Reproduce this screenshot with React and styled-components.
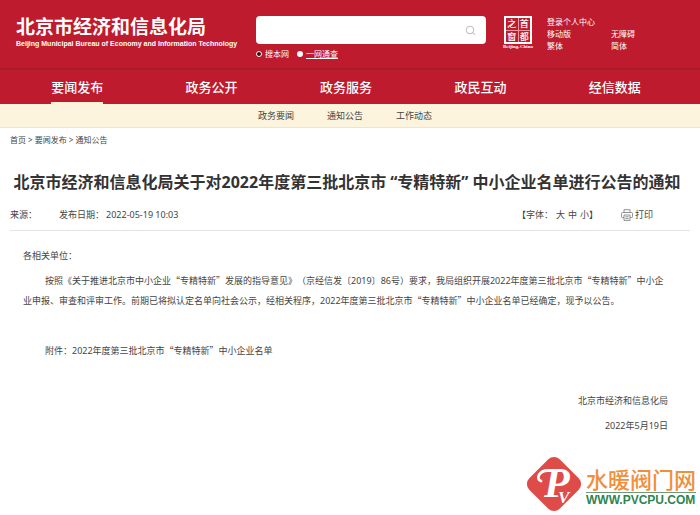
import { useState } from "react";
import styled, { createGlobalStyle } from "styled-components";

const GlobalStyle = createGlobalStyle`
  * {
    box-sizing: border-box;
  }
  body {
    margin: 0;
    background: #fff;
    color: #444;
    font-family: "Noto Sans CJK SC", "Noto Sans", sans-serif;
    font-size: 9px;
    text-spacing-trim: space-all;
  }
  a {
    color: inherit;
    text-decoration: none;
  }
  button, input {
    font: inherit;
    color: inherit;
  }
`;

const Header = styled.header`
  display: flex;
  align-items: flex-start;
  height: 68px;
  padding: 16px 16px 0;
  background: #be1b2e;
  color: #fff;
`;
const Brand = styled.a`
  flex: none;
  width: 240px;
`;
const BrandName = styled.div`
  font-size: 19px;
  font-weight: 700;
  line-height: 20px;
`;
const BrandSub = styled.div`
  margin-top: 4px;
  font-family: "Liberation Sans", sans-serif;
  font-size: 7px;
  font-weight: 700;
  line-height: 8px;
  white-space: nowrap;
`;
const Search = styled.form`
  flex: 0 1 230px;
`;
const SearchBox = styled.div`
  display: flex;
  align-items: center;
  height: 28px;
  padding: 0 10px;
  border-radius: 4px;
  background: #fff;
  input {
    flex: 1;
    min-width: 0;
    border: 0;
    outline: none;
    color: #444;
    background: transparent;
  }
  button {
    display: flex;
    padding: 0;
    border: 0;
    background: none;
    color: #bbb;
    cursor: pointer;
  }
`;
const Scopes = styled.div`
  display: flex;
  gap: 8px;
  margin-top: 5px;
  font-size: 8px;
  line-height: 10px;
`;
const Scope = styled.label`
  display: flex;
  align-items: center;
  gap: 3px;
  text-decoration: ${(props) => (props.$line ? "underline" : "none")};
  input {
    appearance: none;
    width: 6px;
    height: 6px;
    margin: 0;
    border-radius: 50%;
    background: #fff;
  }
  input:checked {
    background: #3b0a10;
    border: 1px solid #fff;
  }
`;
const Seal = styled.a`
  display: flex;
  flex-direction: column;
  align-items: center;
  flex: none;
  width: 32px;
  margin-left: 16px;
  font-family: "Liberation Serif", serif;
  font-size: 5px;
  font-weight: 700;
  line-height: 5px;
  white-space: nowrap;
`;
const SealGrid = styled.div`
  display: grid;
  grid-template-columns: 1fr 1fr;
  gap: 1px;
  width: 28px;
  height: 28px;
  border: 2px solid #fff;
  background: #e9959e;
  span {
    background: #be1b2e;
    font-family: "Noto Sans CJK SC", sans-serif;
    font-size: 9px;
    font-weight: 500;
    line-height: 11px;
    text-align: center;
  }
`;
const UserLinks = styled.div`
  display: grid;
  grid-template-columns: 64px auto;
  margin-left: 13px;
  font-size: 8px;
  line-height: 12px;
  white-space: nowrap;
  a:first-child {
    grid-column: 1 / 3;
  }
`;

const Nav = styled.nav`
  display: flex;
  padding: 0 18px 0 10px;
  height: 36px;
  border-top: 2px solid #a91a2a;
  background: #be1b2e;
  color: #fff;
`;
const NavItem = styled.div`
  flex: 1;
  display: flex;
  justify-content: center;
  a {
    font-size: 13px;
    font-weight: 500;
    line-height: 33px;
    border-bottom: 2px solid ${(props) => (props.$active ? "#fdf1d6" : "transparent")};
  }
`;
const SubNav = styled.nav`
  display: flex;
  justify-content: center;
  gap: 33px;
  padding-right: 10px;
  border-bottom: 1px solid #ece4d0;
  background: #fdf4de;
  line-height: 23px;
`;
const Crumbs = styled.div`
  padding: 6px 10px 0;
  font-family: "Noto Sans", "Noto Sans CJK SC", sans-serif;
  font-size: 8px;
  line-height: 12px;
`;

const Title = styled.h1`
  margin: 24px 16px 0 10px;
  color: #333;
  font-family: "Noto Sans", "Noto Sans CJK SC", sans-serif;
  font-size: 16px;
  font-weight: 700;
  line-height: 24px;
  text-align: center;
`;
const Quoted = styled.span`
  margin: 0 4px;
`;
const Num = styled.span`
  font-family: "Noto Sans", sans-serif;
`;
const Meta = styled.div`
  display: flex;
  align-items: center;
  margin: 11px 10px 0;
  padding-bottom: 5px;
  border-bottom: 1px solid #e4e4e4;
  line-height: 20px;
`;
const Published = styled.span`
  flex: 1;
  margin-left: 22px;
`;
const Plain = styled.button`
  display: inline-flex;
  align-items: center;
  gap: 2px;
  padding: 0;
  border: 0;
  background: none;
  cursor: pointer;
`;
const FontSizes = styled.span`
  display: flex;
  gap: 3px;
  margin-right: 23px;
`;
const PrintWrap = styled.span`
  display: flex;
  margin-right: 37px;
`;

const Article = styled.article`
  padding: 15px 32px 0 23px;
  p {
    margin: 0 0 5px;
    min-height: 20px;
    line-height: 20px;
  }
`;
const Indented = styled.p`
  text-indent: 22px;
`;
const Signed = styled.p`
  text-align: right;
`;

const Sponsor = styled.footer`
  display: flex;
  justify-content: flex-end;
  align-items: flex-end;
  gap: 4px;
  margin-top: 20px;
  padding-right: 4px;
`;
const SponsorText = styled.div`
  padding-bottom: 5px;
`;
const SponsorName = styled.div`
  border-bottom: 1px solid #6a9a78;
  color: #ef8f3c;
  font-size: 22px;
  font-weight: 500;
  line-height: 27px;
`;
const SponsorUrl = styled.div`
  color: #2f8550;
  font-family: "Liberation Sans", sans-serif;
  font-size: 12px;
  font-weight: 700;
  line-height: 14px;
`;

const navItems = ["要闻发布", "政务公开", "政务服务", "政民互动", "经信数据"];
const subItems = ["政务要闻", "通知公告", "工作动态"];
const userLinks = ["登录个人中心", "移动版", "无障碍", "繁体", "简体"];

function SearchIcon() {
  return (
    <svg width="11" height="11" viewBox="0 0 11 11" fill="none" stroke="currentColor">
      <circle cx="5" cy="5" r="3.8" />
      <path d="M7.8 7.8 10 9.6" strokeLinecap="round" />
    </svg>
  );
}

function PrintIcon() {
  return (
    <svg width="12" height="12" viewBox="0 0 12 12" fill="none" stroke="#777" strokeWidth="0.8">
      <path d="M3 3.5V.7h6v2.8M3 8.5H1.4Q.5 8.5.5 7.6V4.5q0-1 1-1h9q1 0 1 1v3.1q0 .9-.9.9H9" />
      <path d="M3 6h6v5.4H3zM4.3 7.8h3.4M4.3 9.6h3.4" />
    </svg>
  );
}

function SponsorLogo() {
  return (
    <svg width="56" height="56" viewBox="0 0 56 56">
      <rect x="6.5" y="6.5" width="43" height="43" rx="8" fill="#df4b49" transform="rotate(45 28 28)" />
      <path
        d="M15 25q-4-1.500-2-6q2.500-4.500 9-4.500h13"
        fill="none"
        stroke="#fff"
        strokeWidth="2.8"
        strokeLinecap="round"
      />
      <g fill="#fff" fontFamily="Liberation Serif, serif" fontStyle="italic">
        <text x="18" y="41" fontSize="42" fontWeight="700">P</text>
        <text x="32" y="47" fontSize="17" fontWeight="700">V</text>
      </g>
    </svg>
  );
}

export default function App() {
  const [keyword, setKeyword] = useState("");
  const [scope, setScope] = useState("site");

  return (
    <>
      <GlobalStyle />
      <Header>
        <Brand href="#">
          <BrandName>北京市经济和信息化局</BrandName>
          <BrandSub>Beijing Municipal Bureau of Economy and Information Technology</BrandSub>
        </Brand>
        <Search onSubmit={(e) => e.preventDefault()}>
          <SearchBox>
            <input aria-label="搜索" value={keyword} onChange={(e) => setKeyword(e.target.value)} />
            <button type="submit" aria-label="搜索">
              <SearchIcon />
            </button>
          </SearchBox>
          <Scopes>
            <Scope>
              <input type="radio" name="scope" checked={scope === "site"} onChange={() => setScope("site")} />
              搜本网
            </Scope>
            <Scope $line>
              <input type="radio" name="scope" checked={scope === "all"} onChange={() => setScope("all")} />
              一网通查
            </Scope>
          </Scopes>
        </Search>
        <Seal href="#">
          <SealGrid>
            <span>之</span>
            <span>首</span>
            <span>窗</span>
            <span>都</span>
          </SealGrid>
          Beijing-China
        </Seal>
        <UserLinks>
          {userLinks.map((name) => (
            <a href="#" key={name}>{name}</a>
          ))}
        </UserLinks>
      </Header>
      <Nav>
        {navItems.map((name, i) => (
          <NavItem key={name} $active={i === 0}>
            <a href="#">{name}</a>
          </NavItem>
        ))}
      </Nav>
      <SubNav>
        {subItems.map((name) => (
          <a href="#" key={name}>{name}</a>
        ))}
      </SubNav>
      <Crumbs>
        <a href="#">首页</a> &gt; <a href="#">要闻发布</a> &gt; <a href="#">通知公告</a>
      </Crumbs>

      <Title>
        北京市经济和信息化局关于对2022年度第三批北京市<Quoted>“专精特新”</Quoted>中小企业名单进行公告的通知
      </Title>
      <Meta>
        <span>来源：</span>
        <Published>
          发布日期： <Num>2022-05-19 10:03</Num>
        </Published>
        <FontSizes>
          【字体：
          <Plain>大</Plain>
          <Plain>中</Plain>
          <span>
            <Plain>小</Plain>】
          </span>
        </FontSizes>
        <PrintWrap>
          <Plain onClick={() => window.print()}>
            <PrintIcon />
            打印
          </Plain>
        </PrintWrap>
      </Meta>

      <Article>
        <p>各相关单位：</p>
        <Indented>
          按照《关于推进北京市中小企业“专精特新”发展的指导意见》（京经信发〔<Num>2019</Num>〕<Num>86</Num>号）要求，我局组织开展<Num>2022</Num>年度第三批北京市“专精特新”中小企业申报、审查和评审工作。前期已将拟认定名单向社会公示，经相关程序，<Num>2022</Num>年度第三批北京市“专精特新”中小企业名单已经确定，现予以公告。
        </Indented>
        <p />
        <Indented>附件：<Num>2022</Num>年度第三批北京市“专精特新”中小企业名单</Indented>
        <p />
        <Signed>北京市经济和信息化局</Signed>
        <Signed>
          <Num>2022</Num>年<Num>5</Num>月<Num>19</Num>日
        </Signed>
      </Article>

      <Sponsor>
        <SponsorLogo />
        <SponsorText>
          <SponsorName>水暖阀门网</SponsorName>
          <SponsorUrl>WWW.PVCPU.COM</SponsorUrl>
        </SponsorText>
      </Sponsor>
    </>
  );
}
